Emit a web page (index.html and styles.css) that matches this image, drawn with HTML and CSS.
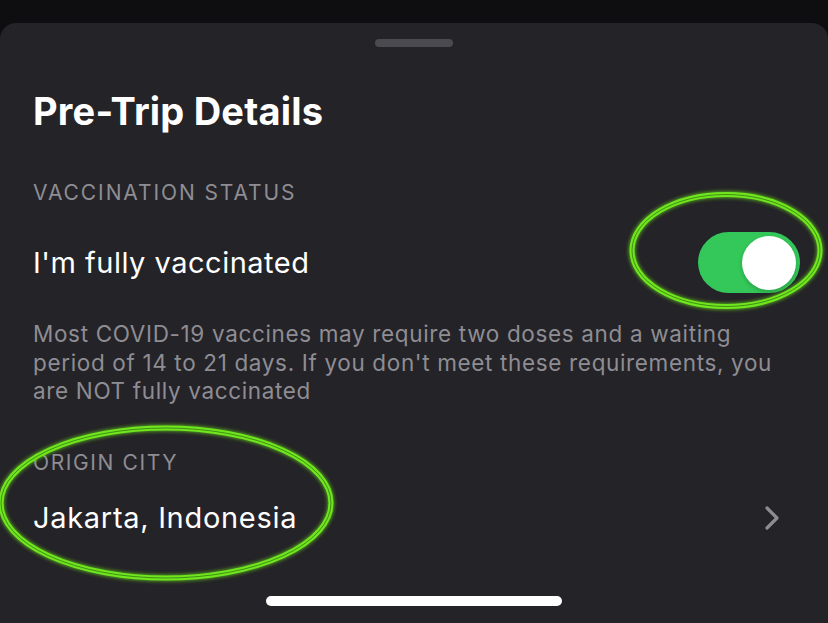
FILE: index.html
```html
<!DOCTYPE html>
<html lang="en">
<head>
<meta charset="utf-8">
<title>Pre-Trip Details</title>
<link rel="stylesheet" href="styles.css">
</head>
<body>
<div class="screen">
  <div class="backdrop"></div>
  <div class="sheet">
    <div class="grabber"></div>
    <h1 class="title">Pre-Trip Details</h1>
    <div class="section-header">VACCINATION STATUS</div>
    <div class="row">
      <span class="row-label">I'm fully vaccinated</span>
      <div class="toggle"><div class="knob"></div></div>
    </div>
    <p class="footnote">Most COVID-19 vaccines may require two doses and a waiting period of 14 to 21 days. If you don't meet these requirements, you are NOT fully vaccinated</p>
    <div class="section-header origin">ORIGIN CITY</div>
    <div class="row city">
      <span class="row-label">Jakarta, Indonesia</span>
      <svg class="chevron" width="16" height="26" viewBox="0 0 16 26"><path d="M3 3 L13 13 L3 23" fill="none" stroke="#8d8c92" stroke-width="3.2" stroke-linecap="round" stroke-linejoin="round"/></svg>
    </div>
    <div class="home-indicator"></div>
  </div>
  <svg class="annotations" width="828" height="623" viewBox="0 0 828 623">
    <defs>
      <filter id="glow" x="-20%" y="-20%" width="140%" height="140%">
        <feGaussianBlur stdDeviation="2" result="b"/>
        <feMerge><feMergeNode in="b"/><feMergeNode in="SourceGraphic"/></feMerge>
      </filter>
    </defs>
    <g filter="url(#glow)" fill="none">
      <ellipse cx="726" cy="250.5" rx="94" ry="56" stroke="#6fe61f" stroke-width="5"/>
      <ellipse cx="726" cy="250.5" rx="94" ry="56" stroke="#2f6a14" stroke-width="1" opacity="0.7"/>
      <ellipse cx="166" cy="503" rx="165" ry="75" stroke="#6fe61f" stroke-width="5"/>
      <ellipse cx="166" cy="503" rx="165" ry="75" stroke="#2f6a14" stroke-width="1" opacity="0.7"/>
    </g>
  </svg>
</div>
</body>
</html>
```

FILE: styles.css
```css
* { box-sizing: border-box; }
html, body {
  margin: 0;
  padding: 0;
  background: #0e0e10;
}
body {
  font-family: Inter, "Liberation Sans", sans-serif;
  color: #ffffff;
}
.screen {
  position: relative;
  width: 828px;
  height: 623px;
  overflow: hidden;
  display: flex;
  flex-direction: column;
}
.backdrop {
  height: 23px;
  flex: none;
  background: #0e0e10;
}
.sheet {
  flex: 1;
  background: #242328;
  border-radius: 16px 16px 0 0;
  padding: 0 33px;
  display: flex;
  flex-direction: column;
}
.grabber {
  align-self: center;
  width: 78px;
  height: 8px;
  border-radius: 4px;
  background: #4b4a50;
  margin-top: 16px;
}
.title {
  margin: 41px 0 0;
  font-size: 38px;
  line-height: 46px;
  font-weight: 700;
  letter-spacing: 0.2px;
}
.section-header {
  margin-top: 46px;
  font-size: 21px;
  line-height: 26px;
  color: #8e8d93;
  letter-spacing: 1.9px;
}
.row {
  margin-top: 26px;
  height: 61px;
  display: flex;
  align-items: center;
  justify-content: space-between;
}
.row-label {
  font-size: 29px;
  line-height: 36px;
  color: #ffffff;
  letter-spacing: 0.5px;
}
.toggle {
  width: 102px;
  height: 61px;
  border-radius: 31px;
  background: #34c759;
  margin-right: -5px;
  position: relative;
  display: flex;
  align-items: center;
  justify-content: flex-end;
  padding-right: 4px;
}
.knob {
  width: 54px;
  height: 54px;
  border-radius: 50%;
  background: #ffffff;
  box-shadow: 0 2px 4px rgba(0,0,0,0.2);
}
.footnote {
  margin: 27px 0 0;
  font-size: 22.5px;
  line-height: 28.5px;
  color: #8e8d93;
  letter-spacing: 0.65px;
}
.section-header.origin {
  margin-top: 44px;
  letter-spacing: 1.6px;
}
.row.city {
  margin-top: 24px;
  height: 36px;
}
.row.city .row-label {
  letter-spacing: 0.7px;
}
.chevron {
  margin-right: 15px;
}
.home-indicator {
  align-self: center;
  width: 296px;
  height: 10px;
  border-radius: 5px;
  background: #ffffff;
  margin-top: 60px;
}
.annotations {
  position: absolute;
  left: 0;
  top: 0;
  pointer-events: none;
}
```
